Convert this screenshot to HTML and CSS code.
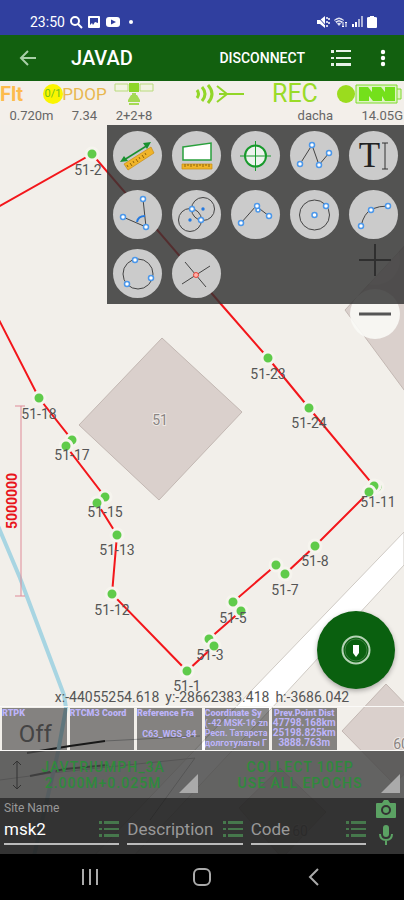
FILE: index.html
```html
<!DOCTYPE html>
<html lang="en">
<head>
  <meta charset="UTF-8">
  <meta name="viewport" content="width=device-width, initial-scale=1">
  <title>JAVAD</title>
  <link rel="stylesheet" href="styles.css">
</head>
<body>
  <div class="status-bar">
    <span class="clock">23:50</span>
    <svg width="14" height="14" viewBox="0 0 14 14" fill="none" stroke="#fff" stroke-width="2"><circle cx="6" cy="6" r="4"/><path d="M9 9l4 4"/></svg>
    <svg width="14" height="14" viewBox="0 0 14 14"><rect x="1" y="1" width="12" height="12" rx="1" fill="#fff"/><path d="M3 3h8v5L8 7l-2 3-1-2-2 2z" fill="#303f9f"/></svg>
    <svg width="16" height="14" viewBox="0 0 16 14"><rect x="1" y="2" width="14" height="10" rx="3" fill="#fff"/><path d="M6 4.500l5 2.500-5 2.500z" fill="#303f9f"/></svg>
    <span class="dot"></span>
    <div class="status-right">
      <svg width="14" height="14" viewBox="0 0 14 14"><path d="M1 5h3l5-4v12L4 9H1z" fill="#fff"/><path d="M1 1l11 12" stroke="#303f9f" stroke-width="1"/><path d="M11 2v2M13 3v2M11 6v2M13 7v2M11 10v2" stroke="#fff" stroke-width="1.500"/></svg>
      <svg width="15" height="14" viewBox="0 0 15 14"><path d="M1 5Q6 0 11 5L6 11z" fill="#fff" opacity=".85"/><path d="M2 6q4-3 8 0M4 8q2-2 4 0" stroke="#303f9f" fill="none"/><path d="M10 7v5m-1-1l1 1 1-1M13 12V7m-1 1l1-1 1 1" stroke="#fff" fill="none"/></svg>
      <svg width="12" height="14" viewBox="0 0 12 14" fill="#fff"><path d="M1 9h2v3H1zM4 7h2v5H4z"/><path d="M7 4h2v8H7zM10 1h2v11h-2z" opacity=".6"/></svg>
      <svg width="12" height="14" viewBox="0 0 12 14"><path d="M4 1h4v1h1q2 0 2 1v9q0 1-1 1H2q-1 0-1-1V3q0-1 2-1h1z" fill="#fff"/></svg>
    </div>
  </div>

  <header class="app-bar">
    <button class="icon-btn" aria-label="Back">
      <svg width="18" height="16" viewBox="0 0 18 16" fill="none" stroke="#a9cfa8" stroke-width="2"><path d="M17 8H2M9 1L2 8l7 7"/></svg>
    </button>
    <h1>JAVAD</h1>
    <button class="disconnect">DISCONNECT</button>
    <button class="icon-btn" aria-label="List">
      <svg width="20" height="16" viewBox="0 0 20 16" fill="#e6f2e6"><path d="M0 0h3v3H0zM5 0h15v2H5zM0 7h3v2H0zM5 7h15v2H5zM0 13h3v3H0zM5 13h15v3H5z"/></svg>
    </button>
    <button class="icon-btn more" aria-label="More options">
      <svg width="6" height="18" viewBox="0 0 6 18" fill="#fff"><circle cx="3" cy="3" r="2.200"/><circle cx="3" cy="9" r="2.200"/><circle cx="3" cy="15" r="2.200"/></svg>
    </button>
  </header>

  <main class="stage">
    <svg class="map" viewBox="0 81 404 773" preserveAspectRatio="xMidYMid slice">
      <!-- road -->
      <path d="M404 532L252 690 90 860H130L284 695 404 565z" fill="#fff" stroke="#cfcac4"/>
      <!-- buildings -->
      <g fill="#dad0cc" stroke="#c3b8b3">
        <path d="M162 338L242 412 159 500 79 425z"/>
        <path d="M345 310L410 240V398z"/>
        <path d="M386 684L342 731 394 784 440 740z"/>
        <path d="M280 768L239 808 282 858 326 812z"/>
      </g>
      <path d="M0 780L60 772 195 758 150 820" fill="none" stroke="#999"/>
      <path d="M27 753L70 746 105 741M30 776L65 769 108 765" fill="none" stroke="#111" stroke-width="2"/>
      <path d="M105 741L200 736" fill="none" stroke="#aaa"/>
      <path class="river" d="M-2 526L20 578 64 695 66 708 58 752 34 856"/>
      <!-- scale -->
      <path d="M21 406V596M15 406H25M15 596H25" stroke="#df8b98" fill="none"/>
      <text class="scale-text" x="17" y="501" transform="rotate(-90 17 501)">5000000</text>

      <g class="house-no">
        <text x="160" y="425">51</text>
        <text x="401" y="749">60</text>
        <text x="300" y="836">60</text>
      </g>

      <path class="track" d="M-2 207L92 154 220 303 268 358 309 408 375 487 369 492 315 546 285 574 276 565 233 602 241 611 209 639 214 646 187 671 112 594 117 535 97 503 105 497 66 446 72 440 39 398 -2 318"/>
      <g class="points">
        <circle cx="377" cy="487" r="6"/>
        <circle cx="92" cy="154" r="6"/>
        <circle cx="268" cy="358" r="6"/>
        <circle cx="309" cy="408" r="6"/>
        <circle cx="374" cy="486" r="6"/>
        <circle cx="369" cy="492" r="6"/>
        <circle cx="315" cy="546" r="6"/>
        <circle cx="276" cy="565" r="6"/>
        <circle cx="285" cy="574" r="6"/>
        <circle cx="233" cy="602" r="6"/>
        <circle cx="241" cy="611" r="6"/>
        <circle cx="209" cy="639" r="6"/>
        <circle cx="214" cy="646" r="6"/>
        <circle cx="187" cy="671" r="6"/>
        <circle cx="112" cy="594" r="6"/>
        <circle cx="117" cy="535" r="6"/>
        <circle cx="105" cy="497" r="6"/>
        <circle cx="97" cy="503" r="6"/>
        <circle cx="72" cy="440" r="6"/>
        <circle cx="66" cy="446" r="6"/>
        <circle cx="39" cy="398" r="6"/>
      </g>
      <g class="point-labels">
        <text x="88" y="175">51-2</text>
        <text x="268" y="379">51-23</text>
        <text x="309" y="428">51-24</text>
        <text x="378" y="507">51-11</text>
        <text x="315" y="566">51-8</text>
        <text x="285" y="595">51-7</text>
        <text x="233" y="623">51-5</text>
        <text x="210" y="660">51-3</text>
        <text x="187" y="691">51-1</text>
        <text x="112" y="615">51-12</text>
        <text x="117" y="555">51-13</text>
        <text x="105" y="517">51-15</text>
        <text x="72" y="460">51-17</text>
        <text x="39" y="419">51-18</text>
      </g>
    </svg>

    <section class="receiver">
      <div class="cell">
        <div class="cell-icon split"><span class="flt">Flt</span><span class="ratio">0/1</span></div>
        <span>0.720m</span>
      </div>
      <div class="cell">
        <div class="cell-icon pdop">PDOP</div>
        <span>7.34</span>
      </div>
      <div class="cell">
        <div class="cell-icon">
          <svg width="40" height="24" viewBox="0 0 40 24"><path d="M1 2h13v7H1zM26 2h13v7H26z" fill="#f2f3e2" stroke="#b9db7c"/><path d="M15 1h10v9H15z" fill="#8ed629"/><path d="M18 11h4v2h-4z" fill="#a6d85c"/><path d="M17 13h6l3 5v2H14v-2z" fill="#a4da52"/><path d="M15 22h10" stroke="#a4da52" stroke-width="2"/></svg>
        </div>
        <span>2+2+8</span>
      </div>
      <div class="cell">
        <div class="cell-icon signal">
          <svg width="50" height="22" viewBox="0 0 50 22" fill="none" stroke="#92d628" stroke-width="3"><path d="M2 7q3 4 0 8M7 4q6 7 0 14M13 2q8 9 0 18"/><path d="M22 3l10 8-10 8M24 11h25" stroke-width="2"/></svg>
        </div>
      </div>
      <div class="cell">
        <div class="cell-icon rec">REC</div>
        <span class="right">dacha</span>
      </div>
      <div class="cell">
        <div class="cell-icon">
          <svg width="68" height="22" viewBox="0 0 68 22"><circle cx="11" cy="11" r="9" fill="#9bdc1e"/><path d="M21 2h41v18H21zM62 6h4v10h-4" fill="#dff3c4" stroke="#7fdc2c"/><path d="M24 4h9l4 5V4h9l4 5V4h10v14H50l-3-5v5h-9l-4-5v5H24z" fill="#74e01b"/></svg>
        </div>
        <span class="right">14.05G</span>
      </div>
    </section>

    <div class="zoom-controls">
      <button class="zoom-in" aria-label="Zoom in"><svg width="34" height="34" viewBox="0 0 34 34"><path d="M1 17h32M17 1v32" stroke="#222" stroke-width="2"/></svg></button>
      <button aria-label="Zoom out"><svg width="34" height="34" viewBox="0 0 34 34"><path d="M1 17h32" stroke="#555" stroke-width="3"/></svg></button>
    </div>

    <div class="palette">
      <button aria-label="Measure distance"><svg viewBox="0 0 49 49"><path d="M11 37l27-17 3 6-26 17z" transform="translate(0 -4)" fill="#f0b429" stroke="#c98d12" stroke-width=".7"/><path d="M14 34l1 2m2-4l2 3m1-5l1 2m2-4l2 3m1-5l1 2m2-4l2 3m1-5l1 2" stroke="#8e640c" fill="none"/><path d="M11 29l24-15" stroke="#18902f" stroke-width="1.500"/><path d="M7 31l4-6 4 5zM38 11l-8 1 4 6z" fill="#18902f"/></svg></button>
      <button aria-label="Measure area"><svg viewBox="0 0 49 49"><path d="M11 16l28-4v17H11z" fill="#fff" stroke="#29a03c" stroke-width="1.500"/><path d="M10 33h30v5H10z" fill="#f0b429" stroke="#c98d12" stroke-width=".7"/><path d="M13 33v3m3-3v2m3-2v3m3-3v2m3-2v3m3-3v2m3-2v3m3-3v2m3-2v3" stroke="#8e640c"/></svg></button>
      <button aria-label="Target"><svg viewBox="0 0 49 49"><circle cx="24.500" cy="25" r="10.500" fill="#eef3ee" stroke="#189a2c" stroke-width="2"/><path d="M24.500 10v30M9 25h31" stroke="#189a2c"/></svg></button>
      <button aria-label="Polyline"><svg viewBox="0 0 49 49"><path class="ink" d="M10 33L22 14l7 20 10-12"/><g class="node"><circle cx="10" cy="33" r="2.500"/><circle cx="22" cy="14" r="2.500"/><circle cx="29" cy="34" r="2.500"/><circle cx="39" cy="22" r="2.500"/></g></svg></button>
      <button class="text-tool" aria-label="Text">T<svg width="6" height="28" viewBox="0 0 6 28"><path d="M0 1h6M0 27h6M3 1v26" stroke="#333" fill="none"/></svg></button>
      <button aria-label="Angle"><svg viewBox="0 0 49 49"><path class="ink" d="M10 27l23 10-3-28"/><path d="M24 32q1-6 8-6" fill="none" stroke="#2479df" stroke-width="2"/><g class="node"><circle cx="10" cy="27" r="2.500"/><circle cx="33" cy="37" r="2.500"/><circle cx="30" cy="9" r="2.500"/></g></svg></button>
      <button aria-label="Circle intersection"><svg viewBox="0 0 49 49"><circle class="ink" cx="18" cy="30" r="11.500"/><circle class="ink" cx="31" cy="19" r="11.500"/><g fill="#2479df"><circle cx="18" cy="30" r="1.700"/><circle cx="31" cy="19" r="1.700"/></g><g class="node"><circle cx="20" cy="19" r="2.500"/><circle cx="29" cy="30" r="2.500"/></g></svg></button>
      <button aria-label="Bisector"><svg viewBox="0 0 49 49"><path class="ink" d="M10 33l15-17 13 10"/><g class="node"><circle cx="10" cy="33" r="2.500"/><circle cx="27" cy="20" r="2"/><circle cx="26" cy="16" r="2.500"/><circle cx="38" cy="26" r="2.500"/></g></svg></button>
      <button aria-label="Circle by center"><svg viewBox="0 0 49 49"><circle class="ink" cx="24.500" cy="25" r="15"/><g class="node"><circle cx="24.500" cy="25" r="2.500"/><circle cx="36" cy="16" r="2.500"/></g></svg></button>
      <button aria-label="Arc"><svg viewBox="0 0 49 49"><path class="ink" d="M12 36q3-13 11-17 7-3 16-3"/><g class="node"><circle cx="12" cy="36" r="2.500"/><circle cx="22" cy="20" r="2.500"/><circle cx="39" cy="16" r="2.500"/></g></svg></button>
      <button aria-label="Circle by three points"><svg viewBox="0 0 49 49"><circle class="ink" cx="25" cy="25" r="15"/><g class="node"><circle cx="22" cy="11" r="2.500"/><circle cx="38" cy="29" r="2.500"/><circle cx="14" cy="35" r="2.500"/></g></svg></button>
      <button aria-label="Line intersection"><svg viewBox="0 0 49 49"><path class="ink" d="M13 13l21 25M10 35l28-18"/><circle cx="24" cy="26" r="2.500" fill="#ffb3ab" stroke="#e8443a"/></svg></button>
    </div>

    <button class="fab" aria-label="Collect point">
      <svg width="30" height="30" viewBox="0 0 30 30"><circle cx="15" cy="15" r="13.500" fill="none" stroke="#b5d3b5" stroke-width="2"/><circle cx="15" cy="15" r="11" fill="none" stroke="#3f7f42"/><path d="M12 10h6v8l-3 4-3-4z" fill="#fff"/></svg>
    </button>

    <div class="bottom">
      <p class="coords"><span>x:-44055254.618</span><span>y:-28662383.418</span><span>h:-3686.042</span></p>

      <div class="tiles">
        <div class="tile"><b>RTPK</b><span class="big">Off</span></div>
        <div class="tile"><b>RTCM3 Coord</b></div>
        <div class="tile"><b>Reference Fra</b><span class="mid">C63_WGS_84</span></div>
        <div class="tile"><b>Coordinate Sy</b><span>(-42 MSK-16 zn</span><span>Респ. Татарста</span><span>долготулаты Г</span></div>
        <div class="tile distance"><b>Prev.Point Dist</b><span>47798.168km</span><span>25198.825km</span><span>3888.763m</span></div>
      </div>

      <div class="actions">
        <button>
          <svg width="10" height="30" viewBox="0 0 10 30"><path d="M5 1v28M1 5l4-4 4 4M1 25l4 4 4-4" fill="none" stroke="#333"/></svg>
          <span>JAVTRIUMPH_3A<br>2.000M+0.025M</span>
        </button>
        <button><span>COLLECT 10EP<br>USE ALL EPOCHS</span></button>
      </div>

      <form class="point-form">
        <div class="field">
          <label for="site">Site Name</label>
          <div class="field-row">
            <input id="site" type="text" value="msk2">
            <button type="button" aria-label="Site list"><svg width="20" height="16" viewBox="0 0 20 16"><path d="M0 0h3v3H0zM5 0h15v3H5zM0 7h3v2H0zM5 7h15v2H5zM0 13h3v3H0zM5 13h15v3H5z"/></svg></button>
          </div>
        </div>
        <div class="field">
          <div class="field-row">
            <input type="text" placeholder="Description" aria-label="Description">
            <button type="button" aria-label="Description list"><svg width="20" height="16" viewBox="0 0 20 16"><path d="M0 0h3v3H0zM5 0h15v3H5zM0 7h3v2H0zM5 7h15v2H5zM0 13h3v3H0zM5 13h15v3H5z"/></svg></button>
          </div>
        </div>
        <div class="field">
          <div class="field-row">
            <input type="text" placeholder="Code" aria-label="Code">
            <button type="button" aria-label="Code list"><svg width="20" height="16" viewBox="0 0 20 16"><path d="M0 0h3v3H0zM5 0h15v3H5zM0 7h3v2H0zM5 7h15v2H5zM0 13h3v3H0zM5 13h15v3H5z"/></svg></button>
          </div>
        </div>
        <div class="media">
          <button type="button" aria-label="Photo"><svg width="20" height="18" viewBox="0 0 20 18"><path d="M1 3h5l2-3h4l2 3h5q1 0 1 1v13q0 1-1 1H1q-1 0-1-1V4q0-1 1-1z"/><circle cx="10" cy="10" r="4" fill="none" stroke="#333" stroke-width="2"/></svg></button>
          <button type="button" aria-label="Voice note"><svg width="16" height="20" viewBox="0 0 16 20"><rect x="5" y="0" width="6" height="12" rx="3"/><path d="M2 9q0 6 6 6t6-6M8 15v5" fill="none" stroke="#5ba263" stroke-width="2"/></svg></button>
        </div>
      </form>
    </div>
  </main>

  <nav class="nav-bar">
    <button aria-label="Recent apps"><svg width="18" height="18" viewBox="0 0 18 18"><path d="M2 1v16M9 1v16M16 1v16"/></svg></button>
    <button aria-label="Home"><svg width="20" height="20" viewBox="0 0 20 20"><rect x="2" y="2" width="16" height="16" rx="5"/></svg></button>
    <button aria-label="Back"><svg width="18" height="18" viewBox="0 0 18 18"><path d="M13 1L5 9l8 8"/></svg></button>
  </nav>
</body>
</html>
```
FILE: styles.css
```css
* {
  box-sizing: border-box;
}

body {
  margin: 0;
  min-height: 100vh;
  display: flex;
  flex-direction: column;
  font-family: Roboto, "Liberation Sans", sans-serif;
  font-size: 13px;
  background: #000;
}

button {
  padding: 0;
  border: none;
  background: none;
  font-family: inherit;
  cursor: pointer;
}

svg {
  display: block;
  flex-shrink: 0;
}

/* Status bar */
.status-bar {
  height: 35px;
  padding: 8px 26px 0 30px;
  display: flex;
  align-items: center;
  gap: 4px;
  background: #303f9f;
  color: #fff;
}

.clock {
  font-size: 14px;
}

.dot {
  width: 4px;
  height: 4px;
  margin-left: 4px;
  border-radius: 50%;
  background: #fff;
}

.status-right {
  margin-left: auto;
  display: flex;
  align-items: center;
  gap: 3px;
}

/* App bar */
.app-bar {
  height: 46px;
  padding: 0 18px 0 19px;
  display: flex;
  align-items: center;
  background: #12600f;
  color: #fff;
}

.app-bar h1 {
  margin: 0 auto 0 34px;
  font-size: 20px;
  font-weight: 500;
}

.disconnect {
  margin-right: 26px;
  color: #fff;
  font-size: 14px;
  font-weight: 500;
}

.more {
  margin-left: 29px;
}

/* Map */
.stage {
  position: relative;
  flex: 1;
  display: flex;
  flex-direction: column;
  background: #f2efea;
  overflow: hidden;
}

.map {
  position: absolute;
  inset: 0;
  width: 100%;
  height: 100%;
}

.track {
  fill: none;
  stroke: #f3161b;
  stroke-width: 2;
}

.points circle {
  fill: #5fcb4a;
  stroke: #f6f4ee;
  stroke-width: 3;
}

.point-labels text,
.house-no text {
  font-size: 14px;
  text-anchor: middle;
  fill: #555;
}

.house-no text {
  fill: #8a8583;
  stroke: #eee8e5;
  stroke-width: 2;
  paint-order: stroke;
}

.scale-text {
  font-size: 14px;
  font-weight: 700;
  text-anchor: middle;
  fill: #e8141c;
}

.river {
  fill: none;
  stroke: #a8d5e2;
  stroke-width: 4;
}

/* Receiver state */
.receiver {
  position: relative;
  height: 44px;
  display: grid;
  grid-template-columns: 63px 43px 56px 1fr 66px 70px;
  background: rgba(242, 239, 234, 0.8);
  color: #666;
}

.cell {
  display: flex;
  flex-direction: column;
  align-items: center;
  line-height: 18px;
}

.cell-icon {
  width: 100%;
  height: 26px;
  display: flex;
  align-items: center;
  justify-content: center;
}

.cell .right {
  align-self: flex-end;
  margin-right: 1px;
}

.split {
  justify-content: space-between;
}

.flt {
  color: #fdbb4d;
  font-size: 20px;
  font-weight: 700;
}

.ratio {
  width: 20px;
  height: 20px;
  border-radius: 50%;
  background: #fbf500;
  color: #6fc21c;
  font-size: 11px;
  line-height: 20px;
  text-align: center;
}

.pdop {
  color: #e8b74f;
  font-size: 17px;
}

.rec {
  justify-content: flex-start;
  padding-left: 4px;
  color: #9adb28;
  font-size: 25px;
  line-height: 26px;
}

.signal {
  padding-left: 10px;
}

/* Drawing tools */
.palette {
  position: relative;
  align-self: flex-end;
  display: grid;
  grid-template-columns: repeat(5, 49px);
  gap: 10px;
  padding: 6px;
  background: rgba(50, 50, 50, 0.83);
}

.palette button {
  width: 49px;
  height: 49px;
  border-radius: 50%;
  background: #cbcbcb;
}

.palette .text-tool {
  display: flex;
  align-items: center;
  justify-content: center;
  gap: 2px;
  color: #222;
  font-family: "Liberation Serif", serif;
  font-size: 35px;
}

.ink {
  fill: none;
  stroke: #444;
  stroke-width: 1;
}

.node circle {
  fill: #fff;
  stroke: #4c98ea;
  stroke-width: 1.5;
}

.zoom-controls {
  position: absolute;
  top: 154px;
  right: 4px;
  display: flex;
  flex-direction: column;
  gap: 4px;
}

.zoom-controls button {
  width: 50px;
  height: 50px;
  display: flex;
  align-items: center;
  justify-content: center;
  border-radius: 50%;
  background: rgba(250, 249, 246, 0.9);
}

.zoom-controls .zoom-in {
  background: rgba(250, 249, 246, 0.3);
}

.fab {
  position: absolute;
  right: 9px;
  bottom: 165px;
  width: 78px;
  height: 78px;
  display: flex;
  align-items: center;
  justify-content: center;
  border-radius: 50%;
  background: #0a600f;
  box-shadow: 0 2px 5px rgba(0, 0, 0, 0.3);
}

/* Bottom panels */
.bottom {
  position: relative;
  margin-top: auto;
}

.coords {
  margin: 0;
  display: flex;
  justify-content: center;
  gap: 6px;
  font-size: 14px;
  line-height: 18px;
  color: #555;
}

.tiles {
  height: 45px;
  padding: 1px 0 0 2px;
  display: grid;
  grid-template-columns: repeat(6, 1fr);
  gap: 3px;
  border-top: 1px solid #fbfaf8;
  border-bottom: 1px solid #fbfaf8;
}

.tile {
  height: 42px;
  min-width: 0;
  overflow: hidden;
  display: flex;
  flex-direction: column;
  background: rgba(30, 30, 30, 0.52);
  color: #bdb4fa;
  font-size: 9px;
  font-weight: 700;
  line-height: 10px;
  white-space: nowrap;
}

.tile .big {
  color: #444;
  font-size: 24px;
  font-weight: 400;
  line-height: 32px;
  padding-left: 2px;
  text-align: center;
}

.tile .mid {
  line-height: 32px;
  text-align: center;
}

.distance {
  font-size: 10px;
  text-align: center;
}

.distance b {
  font-size: 9px;
}

.actions {
  height: 47px;
  display: flex;
  background: rgba(72, 72, 72, 0.84);
}

.actions button {
  position: relative;
  flex: 1;
  padding: 0 18px 0 12px;
  display: flex;
  align-items: center;
  color: #2f8a3c;
  font-size: 14px;
  font-weight: 500;
  line-height: 16px;
  letter-spacing: 1px;
}

.actions span {
  flex: 1;
}

.actions button::after {
  content: "";
  position: absolute;
  right: 4px;
  bottom: 5px;
  border-left: 19px solid transparent;
  border-bottom: 19px solid #aaa;
}

.point-form {
  height: 56px;
  padding: 0 6px 9px 4px;
  display: flex;
  align-items: flex-end;
  gap: 8px;
  background: rgba(35, 35, 35, 0.92);
}

.field {
  flex: 1;
  min-width: 0;
}

.field label {
  display: block;
  color: #999;
  font-size: 12px;
  line-height: 14px;
}

.field-row {
  height: 30px;
  display: flex;
  align-items: center;
  border-bottom: 2px solid #bbb;
}

.field input {
  flex: 1;
  width: 0;
  min-width: 0;
  padding: 0;
  border: none;
  outline: none;
  background: none;
  color: #fff;
  font-family: inherit;
  font-size: 17px;
}

.field input::placeholder {
  color: #999;
  opacity: 1;
}

.media svg {
  fill: #5ba263;
}

.field svg {
  fill: #46784c;
}

.media {
  width: 24px;
  height: 100%;
  display: flex;
  flex-direction: column;
  align-items: center;
  justify-content: space-between;
  padding-top: 2px;
}

/* System navigation */
.nav-bar {
  height: 46px;
  padding: 0 34px;
  display: grid;
  grid-template-columns: repeat(3, 1fr);
  align-items: center;
  background: #000;
}

.nav-bar button {
  display: flex;
  justify-content: center;
}

.nav-bar svg {
  fill: none;
  stroke: #aaa;
  stroke-width: 2;
}
```
